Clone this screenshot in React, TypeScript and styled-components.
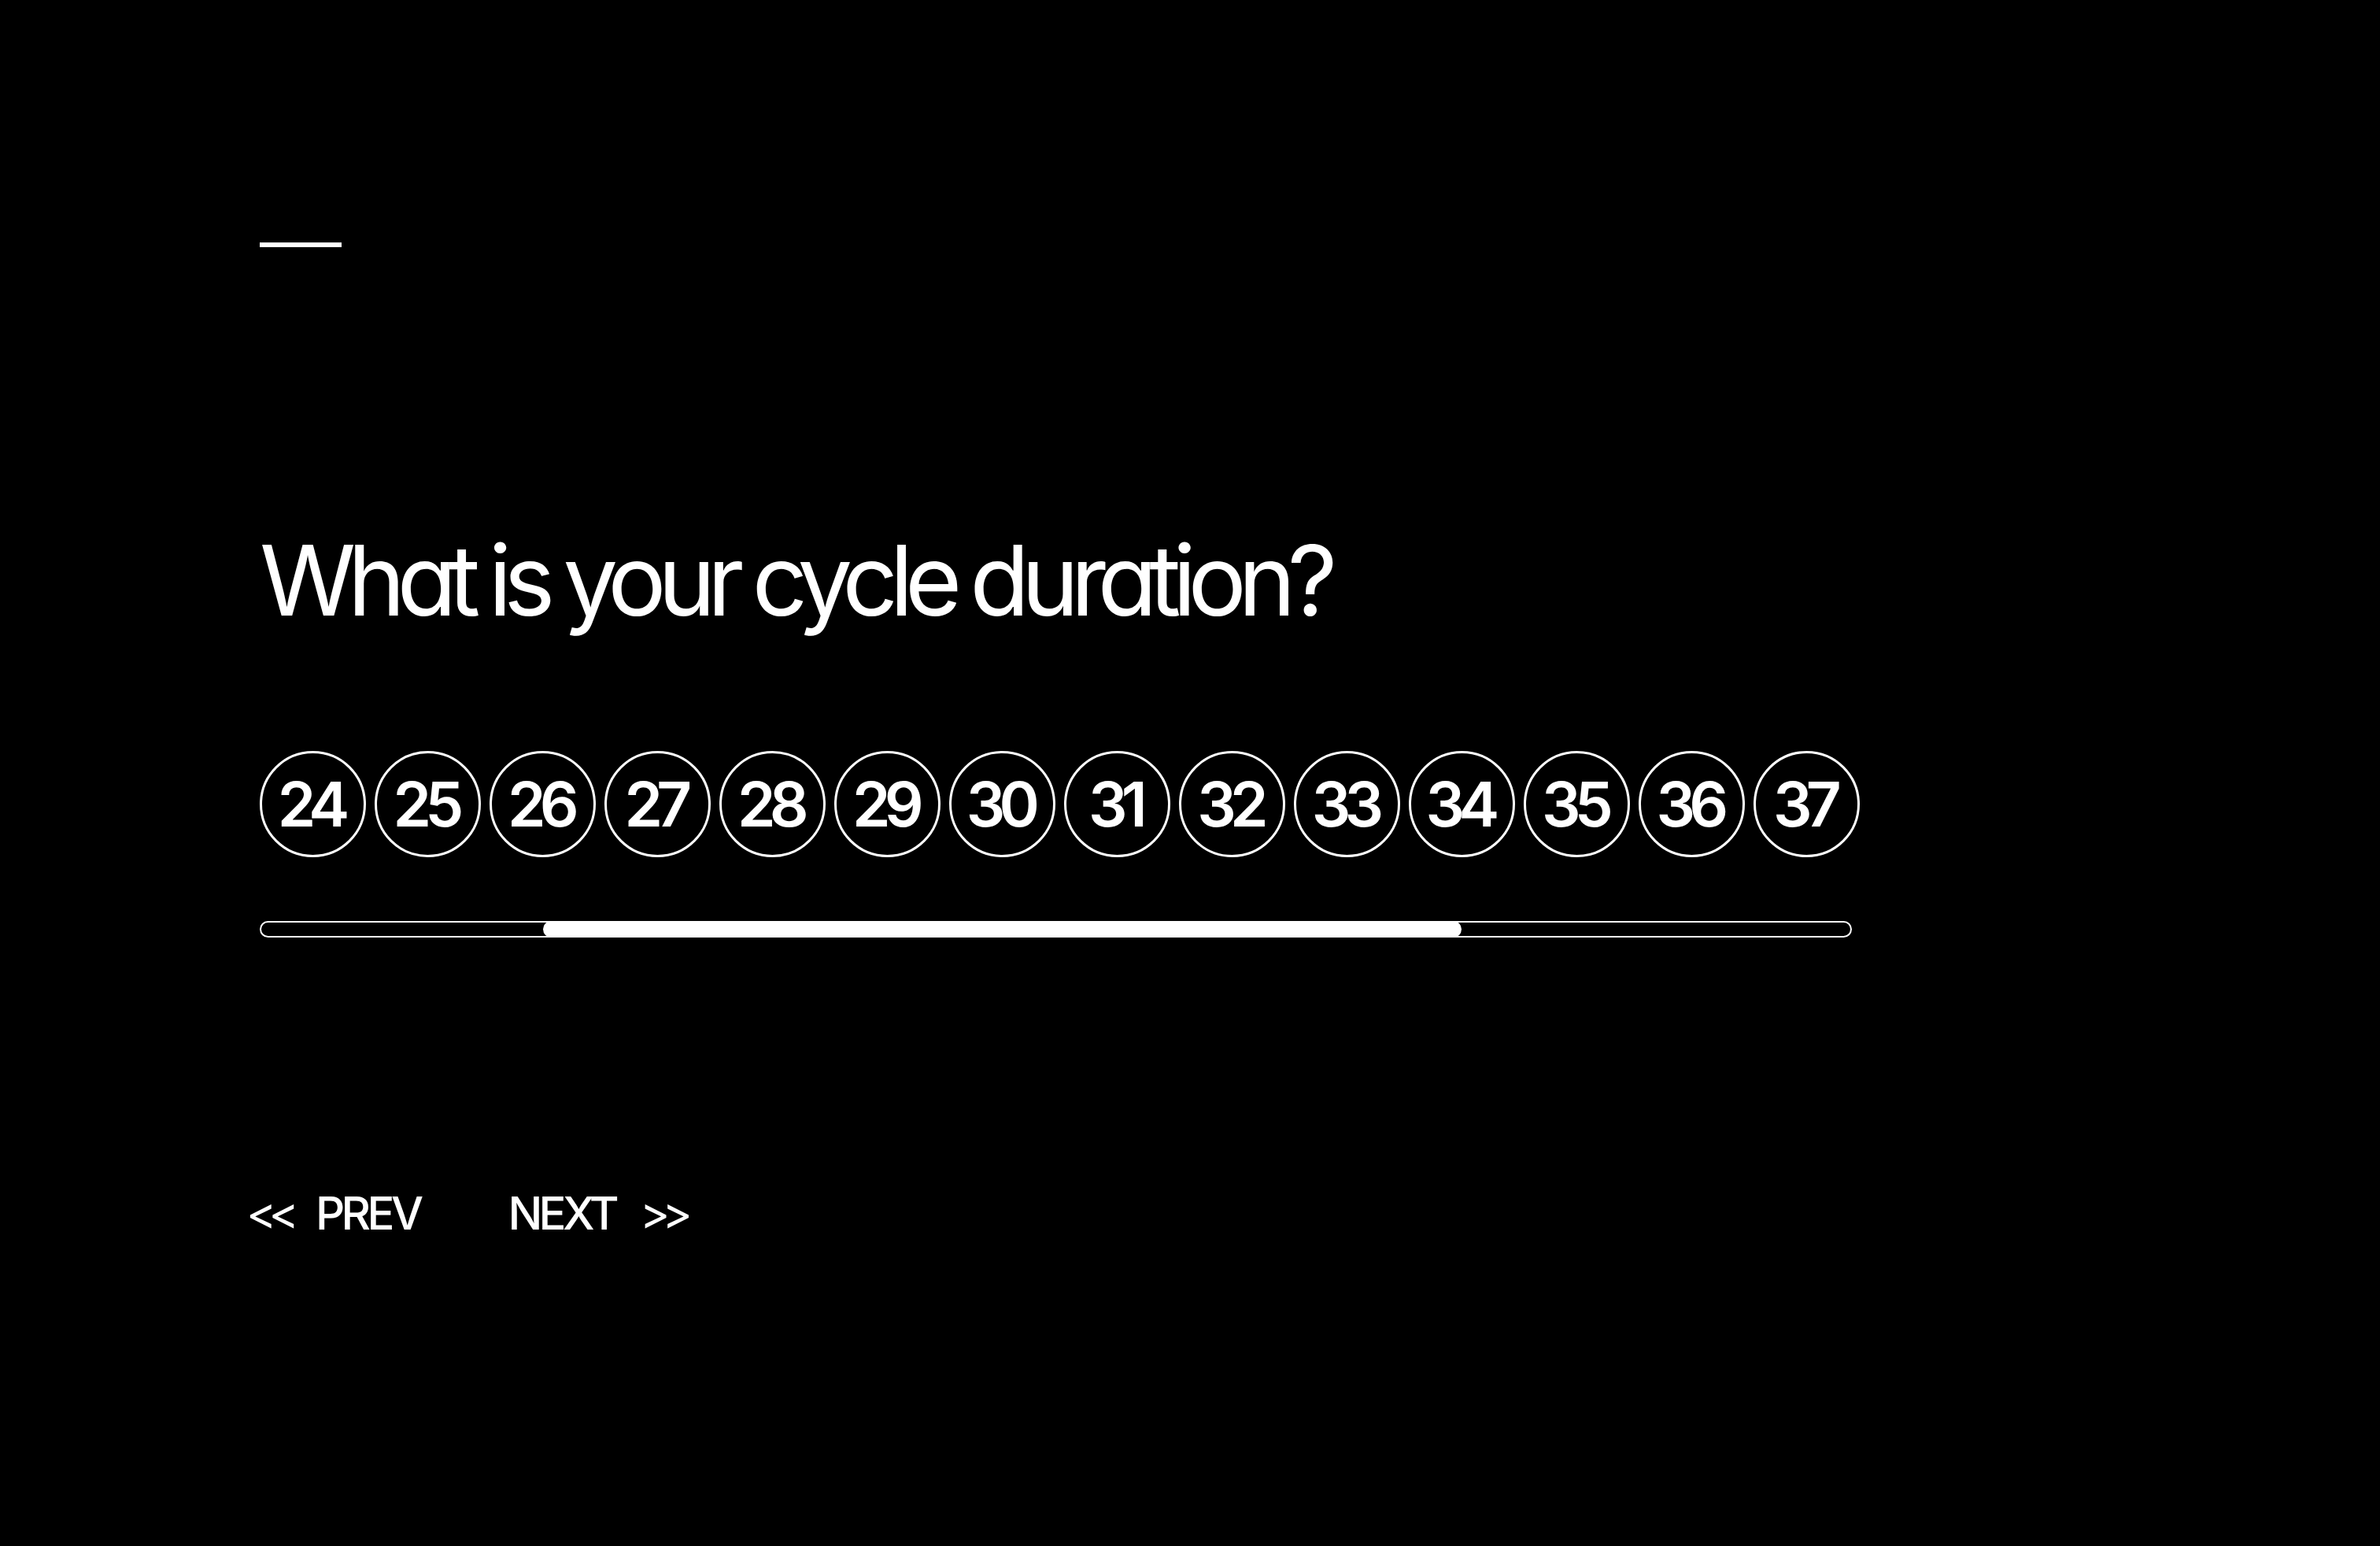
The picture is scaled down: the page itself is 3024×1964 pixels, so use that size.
import React from "react";
import styled, { createGlobalStyle } from "styled-components";

const Global = createGlobalStyle`
  html, body { margin: 0; padding: 0; background: #000; }
  body { font-family: Inter, "Liberation Sans", sans-serif; color: #fff; }
`;

const Page = styled.main`
  min-height: 1964px;
  box-sizing: border-box;
  padding: 308px 0 0 330px;
  background: #000;
  display: flex;
  flex-direction: column;
  align-items: flex-start;
`;

const Dash = styled.div`
  width: 104px;
  height: 6px;
  background: #fff;
`;

const Heading = styled.h1`
  margin: 361px 0 0 0;
  font-family: Inter, "Liberation Sans", sans-serif;
  font-feature-settings: "cv11" 1;
  font-weight: 400;
  font-size: 124px;
  line-height: 1;
  letter-spacing: -0.085em;
  word-spacing: -0.03em;
  color: #fff;
`;

const Options = styled.div`
  margin-top: 155px;
  display: flex;
  gap: 11px;
`;

const Option = styled.button`
  width: 135px;
  height: 135px;
  box-sizing: border-box;
  border: 3px solid #fff;
  border-radius: 50%;
  background: transparent;
  color: #fff;
  padding: 0 6px 0 0;
  display: flex;
  align-items: center;
  justify-content: center;
  font-family: Inter, "Liberation Sans", sans-serif;
  font-weight: 600;
  font-size: 78px;
  letter-spacing: -0.1em;
  line-height: 1;
  cursor: pointer;
`;

const Track = styled.div`
  margin-top: 81px;
  position: relative;
  width: 2023px;
  height: 21px;
  border-radius: 999px;
  box-shadow: inset 0 0 0 2px #fff;
`;

const Fill = styled.div`
  position: absolute;
  top: 0;
  bottom: 0;
  background: #fff;
  border-radius: 999px;
`;

const Nav = styled.nav`
  margin-top: 321px;
  margin-left: -17px;
  display: flex;
  gap: 112px;
`;

const NavButton = styled.button`
  background: transparent;
  border: 0;
  padding: 0;
  color: #fff;
  display: flex;
  align-items: center;
  gap: 31px;
  font-family: Inter, "Liberation Sans", sans-serif;
  font-weight: 500;
  font-size: 58px;
  line-height: 1;
  letter-spacing: -0.08em;
  cursor: pointer;
`;

const Arrows = styled.span`
  font-weight: 400;
  letter-spacing: -0.17em;
`;

const values = Array.from({ length: 14 }, (_, i) => 24 + i);

export default function App() {
  const start = 360 / 2023;
  const end = 1527 / 2023;
  return (
    <>
      <Global />
      <Page>
        <Dash />
        <Heading>What is your cycle duration?</Heading>
        <Options>
          {values.map((v) => (
            <Option key={v}>{v}</Option>
          ))}
        </Options>
        <Track>
          <Fill style={{ left: `${start * 100}%`, width: `${(end - start) * 100}%` }} />
        </Track>
        <Nav>
          <NavButton>
            <Arrows>&lt;&lt;</Arrows>
            <span>PREV</span>
          </NavButton>
          <NavButton>
            <span>NEXT</span>
            <Arrows>&gt;&gt;</Arrows>
          </NavButton>
        </Nav>
      </Page>
    </>
  );
}
